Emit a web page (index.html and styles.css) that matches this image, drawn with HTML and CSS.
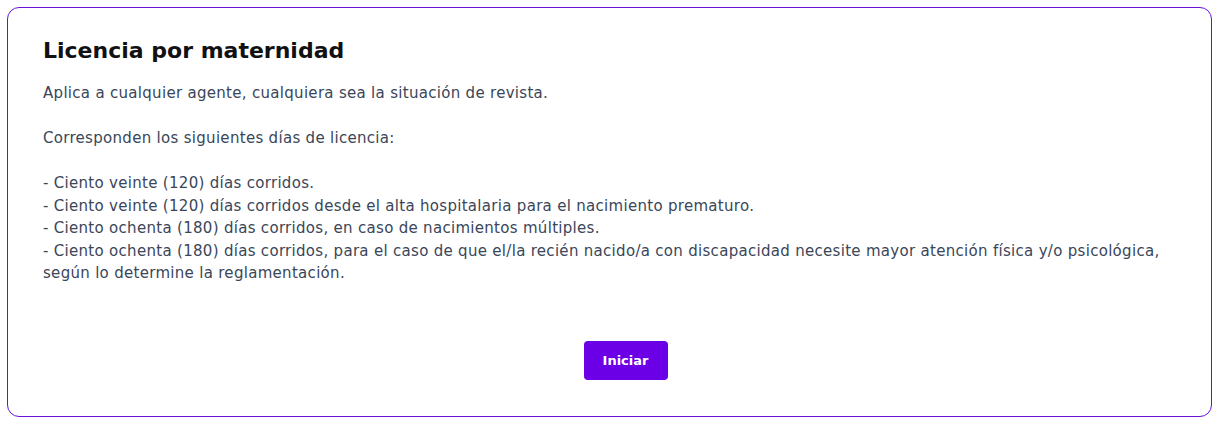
FILE: index.html
```html
<!DOCTYPE html>
<html lang="es">
<head>
  <meta charset="UTF-8">
  <meta name="viewport" content="width=device-width, initial-scale=1.0">
  <title>Licencia por maternidad</title>
  <link rel="stylesheet" href="styles.css">
</head>
<body>
  <main>
    <section class="license-card">
      <h1 class="license-title">Licencia por maternidad</h1>
      <!-- Description text keeps its original line breaks -->
      <p class="license-text">Aplica a cualquier agente, cualquiera sea la situación de revista.

Corresponden los siguientes días de licencia:

- Ciento veinte (120) días corridos.
- Ciento veinte (120) días corridos desde el alta hospitalaria para el nacimiento prematuro.
- Ciento ochenta (180) días corridos, en caso de nacimientos múltiples.
- Ciento ochenta (180) días corridos, para el caso de que el/la recién nacido/a con discapacidad necesite mayor atención física y/o psicológica, según lo determine la reglamentación.</p>

      <div class="button-container">
        <button class="start-button" type="button">Iniciar</button>
      </div>
    </section>
  </main>
</body>
</html>
```

FILE: styles.css
```css
/* General Styles */
body {
  font-family: "DejaVu Sans", Arial, sans-serif;
  margin: 0;
  padding: 7px;
  background-color: #ffffff;
  color: #3a4659;
}

.license-card {
  box-sizing: border-box;
  width: 1205px;
  height: 410px;
  border: 1px solid #6a0fdc;
  border-radius: 12px;
  padding: 28px 3px 0 35px;
}

.license-title {
  font-size: 22px;
  font-weight: 700;
  color: #111111;
  margin: 0 0 16px;
  line-height: 30px;
}

.license-text {
  font-size: 15px;
  letter-spacing: 0.3px;
  line-height: 22.5px;
  white-space: pre-line;
  margin: 0;
}

.button-container {
  display: flex;
  justify-content: center;
  margin-top: 56px;
}

.start-button {
  width: 84px;
  height: 39px;
  background-color: #6b00e6;
  color: #ffffff;
  border: none;
  border-radius: 4px;
  font-family: inherit;
  font-size: 13px;
  font-weight: 700;
  cursor: pointer;
}

.start-button:hover {
  background-color: #5600bb;
}
```
